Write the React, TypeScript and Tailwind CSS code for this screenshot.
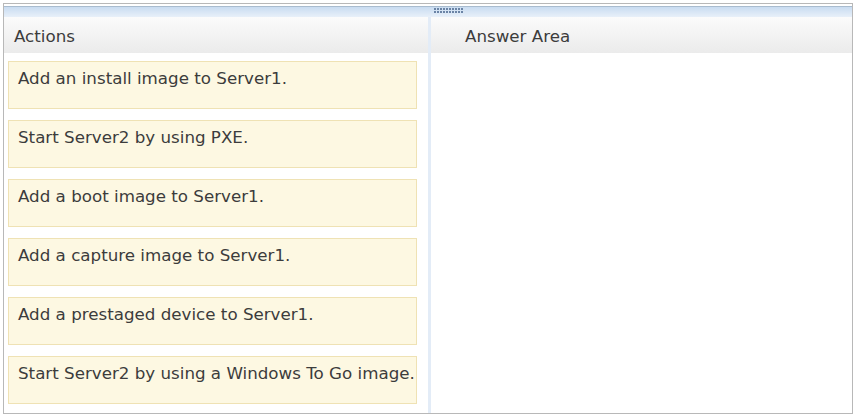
const actions = [
  "Add an install image to Server1.",
  "Start Server2 by using PXE.",
  "Add a boot image to Server1.",
  "Add a capture image to Server1.",
  "Add a prestaged device to Server1.",
  "Start Server2 by using a Windows To Go image.",
];

export default function App() {
  return (
    <div
      className="h-[417px] w-[856px] bg-white p-[3px] text-[16.7px] text-[#3c3c3c]"
      style={{ fontFamily: '"DejaVu Sans", Verdana, sans-serif' }}
    >
      <div className="flex h-[411px] flex-col border border-[#b8b8b8] pt-[2px]">
        {/* splitter bar */}
        <div className="relative h-[11px] border-t border-[#a9bccf] bg-gradient-to-b from-[#c9dcf1] to-[#e8f0f9]">
          <div className="absolute left-[430px] top-[1px] grid grid-cols-10 gap-[1px]">
            {Array.from({ length: 20 }).map((_, i) => (
              <span key={i} className="h-[2px] w-[2px] bg-[#6b84a6]" />
            ))}
          </div>
        </div>
        <div className="flex flex-1">
          {/* left column */}
          <div className="flex w-[427px] flex-col border-r-[3px] border-[#e3ecf7]">
            <div className="flex h-[36px] items-center bg-gradient-to-b from-[#fbfbfb] to-[#ebebeb] px-[10px] pt-[4px]">
              Actions
            </div>
            <div className="flex flex-col gap-[11px] px-[4px] pt-[8px]">
              {actions.map((a) => (
                <div
                  key={a}
                  className="h-[48px] w-[409px] border border-[#efe2b4] bg-[#fdf8e2] px-[9px] pt-[6px] leading-[20px] whitespace-nowrap"
                >
                  {a}
                </div>
              ))}
            </div>
          </div>
          {/* right column */}
          <div className="flex flex-1 flex-col">
            <div className="flex h-[36px] items-center bg-gradient-to-b from-[#fbfbfb] to-[#ebebeb] pl-[34px] pt-[4px]">
              Answer Area
            </div>
            <div className="flex-1 bg-white" />
          </div>
        </div>
      </div>
    </div>
  );
}
